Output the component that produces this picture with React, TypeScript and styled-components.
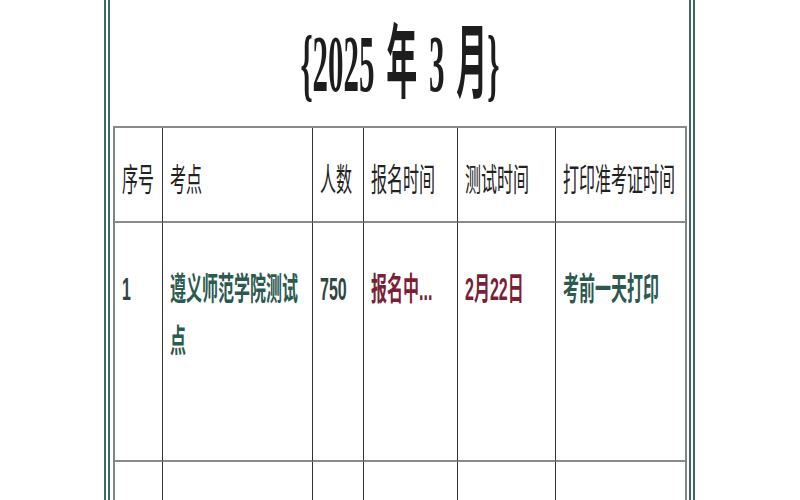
import styled, { createGlobalStyle } from "styled-components"

const GlobalStyle = createGlobalStyle`
  html,
  body {
    margin: 0;
    background: #fff;
    overflow: hidden;
  }
`

type Tone = "plain" | "green" | "red"

const toneColor: Record<Tone, string> = {
  plain: "#2e4744",
  green: "#2b5a4f",
  red: "#7a1f36",
}

const columns = ["序号", "考点", "人数", "报名时间", "测试时间", "打印准考证时间"]

const row: { text: string; tone: Tone }[] = [
  { text: "1", tone: "plain" },
  { text: "遵义师范学院测试点", tone: "green" },
  { text: "750", tone: "plain" },
  { text: "报名中...", tone: "red" },
  { text: "2月22日", tone: "red" },
  { text: "考前一天打印", tone: "green" },
]

const App: React.FC = () => (
  <>
    <GlobalStyle />
    <Page>
      <Frame>
        <Title>
          <TitleText>{"{2025 年 3 月}"}</TitleText>
        </Title>
        <Grid>
          {columns.map((c, i) => (
            <HeadCell key={c} $last={i === columns.length - 1}>
              <Stretch>{c}</Stretch>
            </HeadCell>
          ))}
          {row.map((c, i) => (
            <BodyCell key={i} $last={i === row.length - 1} $tone={c.tone}>
              <Stretch>{c.text}</Stretch>
            </BodyCell>
          ))}
          {columns.map((c, i) => (
            <EmptyCell key={c} $last={i === columns.length - 1} />
          ))}
        </Grid>
      </Frame>
    </Page>
  </>
)

const Page = styled.div`
  width: 800px;
  height: 500px;
  overflow: hidden;
`

const Frame = styled.div`
  box-sizing: border-box;
  margin-left: 104px;
  width: 591px;
  height: 500px;
  padding: 0 2px 0 3px;
  border-left: 6px double #3f6864;
  border-right: 6px double #3f6864;
  overflow: hidden;
`

const Title = styled.h1`
  margin: 0;
  height: 126px;
  display: flex;
  align-items: center;
  justify-content: center;
  padding-top: 4px;
  box-sizing: border-box;
  font: 700 31px/36px "Liberation Serif", "Noto Sans CJK SC", serif;
  word-spacing: 4px;
  color: #1d1d1d;
`

const TitleText = styled.span`
  display: inline-block;
  white-space: pre;
  transform: scaleY(2.6);
`

const Grid = styled.div`
  display: grid;
  grid-template-columns: 48px 150px 51px 94px 98px 1fr;
  grid-template-rows: 95px 239px 120px;
  border-top: 2px solid #8a8a8a;
  border-left: 2px solid #7b8886;
  border-right: 2px solid #7b8886;
`

const Cell = styled.div<{ $last?: boolean }>`
  box-sizing: border-box;
  display: flex;
  align-items: flex-start;
  padding: 0 7px;
  border-bottom: 2px solid #8a8a8a;
  border-right: ${({ $last }) => ($last ? "none" : "1px solid #333")};
  font: 400 16px/26px "Liberation Sans", "Noto Sans CJK SC", sans-serif;
  overflow: hidden;
`

const HeadCell = styled(Cell)`
  padding-top: 27px;
  color: #222;
  white-space: nowrap;
`

const BodyCell = styled(Cell)<{ $tone: Tone }>`
  padding-top: 41px;
  font-weight: 700;
  color: ${({ $tone }) => toneColor[$tone]};
`

const EmptyCell = styled(Cell)``

const Stretch = styled.span`
  display: inline-block;
  transform: scaleY(2);
  transform-origin: 0 0;
`

export default App
